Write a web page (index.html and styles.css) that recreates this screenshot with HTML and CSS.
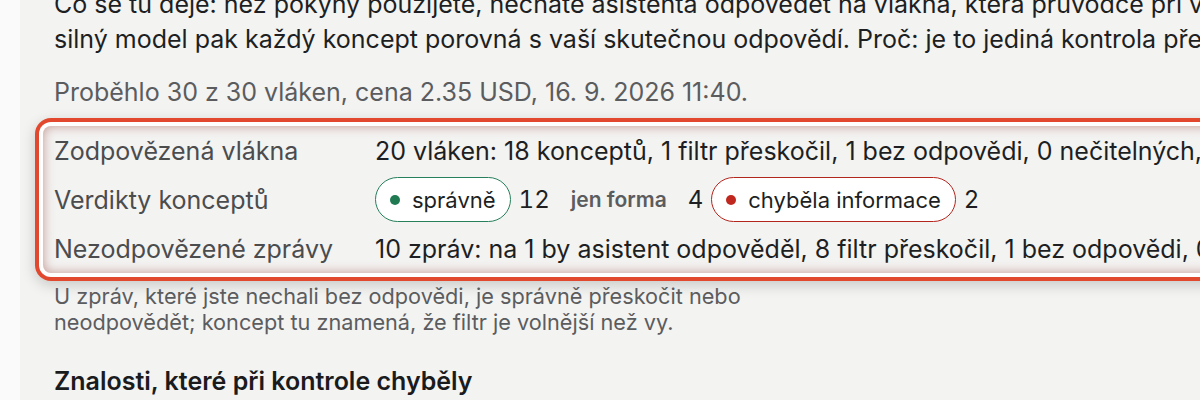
FILE: index.html
```html
<!DOCTYPE html>
<html lang="cs">
<head>
<meta charset="utf-8">
<title>Kontrola konceptů</title>
<link rel="stylesheet" href="styles.css">
</head>
<body>
<main class="page">
  <p class="intro">Co se tu děje: než pokyny použijete, necháte asistenta odpovědět na vlákna, která průvodce při výběru přeskočil, a<br>silný model pak každý koncept porovná s vaší skutečnou odpovědí. Proč: je to jediná kontrola před tím, než začne odpovídat sám.</p>
  <p class="meta">Proběhlo 30 z 30 vláken, cena 2.35 USD, 16. 9. 2026 11:40.</p>
  <div class="summary">
    <div class="row">
      <div class="label">Zodpovězená vlákna</div>
      <div class="value">20 vláken: 18 konceptů, 1 filtr přeskočil, 1 bez odpovědi, 0 nečitelných, 0 chyb</div>
    </div>
    <div class="row">
      <div class="label">Verdikty konceptů</div>
      <div class="value verdicts">
        <span class="pill pill-ok"><span class="dot"></span>správně</span>
        <span class="count">12</span>
        <span class="pill pill-plain">jen forma</span>
        <span class="count">4</span>
        <span class="pill pill-bad"><span class="dot"></span>chyběla informace</span>
        <span class="count">2</span>
      </div>
    </div>
    <div class="row">
      <div class="label">Nezodpovězené zprávy</div>
      <div class="value">10 zpráv: na 1 by asistent odpověděl, 8 filtr přeskočil, 1 bez odpovědi, 0 chyb</div>
    </div>
  </div>
  <p class="caption">U zpráv, které jste nechali bez odpovědi, je správně přeskočit nebo neodpovědět; koncept tu znamená, že filtr je volnější než vy.</p>
  <h2 class="heading">Znalosti, které při kontrole chyběly</h2>
</main>
</body>
</html>
```
FILE: styles.css
```css
html, body {
  margin: 0;
  padding: 0;
}
body {
  background: #fafafa;
  overflow: hidden;
  height: 400px;
  font-family: Inter, "Noto Sans", "DejaVu Sans", sans-serif;
}
.page {
  margin: -30px 0 0 20px;
  width: 1500px;
  padding: 0 0 40px 34px;
  background: #f3f3f2;
  min-height: 500px;
  box-sizing: border-box;
}
.intro {
  margin: 0;
  padding-top: 17px;
  font-size: 25px;
  line-height: 35px;
  color: #1d1f22;
  white-space: nowrap;
}
.meta {
  margin: 18px 0 0;
  font-size: 25px;
  line-height: 35px;
  color: #5b5c5e;
}
.summary {
  margin: 16px 0 0 -11px;
  padding: 0 11px;
  border-radius: 8px;
  background: #f3f3f2;
  box-shadow:
    inset 0 0 11px rgba(150, 60, 50, 0.5),
    0 0 0 4px #ffffff,
    0 0 0 8px #e1482d,
    0 4px 14px 8px rgba(0, 0, 0, 0.18);
}
.row {
  display: flex;
  align-items: center;
  height: 49px;
}
.label {
  width: 321px;
  flex: none;
  font-size: 25px;
  color: #4b4c4e;
}
.value {
  font-size: 25px;
  color: #1d1f22;
  white-space: nowrap;
}
.verdicts {
  display: flex;
  align-items: center;
  gap: 8px;
}
.pill {
  display: inline-flex;
  align-items: center;
  gap: 12px;
  height: 45px;
  box-sizing: border-box;
  padding: 0 14px;
  border-radius: 999px;
  border: 1.5px solid transparent;
  font-size: 22px;
  color: #1d1f22;
}
.pill-ok {
  background: #ffffff;
  border-color: #26805b;
}
.pill-bad {
  background: #ffffff;
  border-color: #b3261e;
}
.pill-plain {
  padding: 0 12px;
  color: #5b5c5e;
  font-weight: 600;
  font-size: 21px;
}
.dot {
  width: 10px;
  height: 10px;
  border-radius: 50%;
  flex: none;
}
.pill-ok .dot { background: #1f7a52; }
.pill-bad .dot { background: #c0281f; }
.count {
  font-size: 24px;
  font-variant-numeric: tabular-nums;
  color: #1d1f22;
}
.caption {
  margin: 10px 0 0;
  max-width: 720px;
  font-size: 21.7px;
  line-height: 26px;
  color: #5b5c5e;
}
.heading {
  margin: 31px 0 0;
  font-size: 25px;
  line-height: 31px;
  font-weight: 600;
  color: #1a1b1d;
}
```
